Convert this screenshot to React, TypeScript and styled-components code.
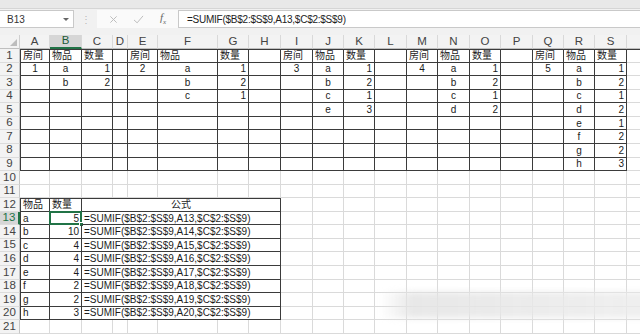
import React from "react";
import styled, { createGlobalStyle } from "styled-components";

const GlobalStyle = createGlobalStyle`
  html, body {
    margin: 0;
    padding: 0;
    background: #fff;
  }
  body {
    width: 640px;
    height: 336px;
    overflow: hidden;
    font-family: "Liberation Sans", "Noto Sans CJK SC", sans-serif;
  }
  * { box-sizing: border-box; }
`;

const COL_WIDTHS = [30, 32, 31, 15, 30, 60, 31, 32, 32, 31, 31, 32, 31, 32, 31, 32, 31, 31, 32, 40];
const LETTERS = "ABCDEFGHIJKLMNOPQRST".split("");
const ROW_COUNT = 21;

type Align = "left" | "center" | "right";

type CellSpec = {
  text?: string;
  align?: Align;
  span?: number;
  dark?: boolean;
  left?: boolean;
  top?: boolean;
  selected?: boolean;
};

const rooms = [
  { col: 0, no: "1", items: [["a", "1"], ["b", "2"]] },
  { col: 4, no: "2", items: [["a", "1"], ["b", "2"], ["c", "1"]] },
  { col: 8, no: "3", items: [["a", "1"], ["b", "2"], ["c", "1"], ["e", "3"]] },
  { col: 12, no: "4", items: [["a", "1"], ["b", "2"], ["c", "1"], ["d", "2"]] },
  {
    col: 16,
    no: "5",
    items: [["a", "1"], ["b", "2"], ["c", "1"], ["d", "2"], ["e", "1"], ["f", "2"], ["g", "2"], ["h", "3"]],
  },
];

const totals = [["a", "5"], ["b", "10"], ["c", "4"], ["d", "4"], ["e", "4"], ["f", "2"], ["g", "2"], ["h", "3"]];

const plainCells = (n: number): CellSpec[] => Array.from({ length: n }, () => ({}));

function buildRow(r: number): CellSpec[] {
  if (r <= 9) {
    const cells: CellSpec[] = Array.from({ length: 20 }, (_, c) => ({
      dark: c < 19,
      left: c === 0,
      top: r === 1,
    }));
    rooms.forEach((room) => {
      if (r === 1) {
        cells[room.col].text = "房间";
        cells[room.col + 1].text = "物品";
        cells[room.col + 2].text = "数量";
        return;
      }
      if (r === 2) {
        cells[room.col].text = room.no;
        cells[room.col].align = "center";
      }
      const item = room.items[r - 2];
      if (item) {
        cells[room.col + 1].text = item[0];
        cells[room.col + 1].align = "center";
        cells[room.col + 2].text = item[1];
        cells[room.col + 2].align = "right";
      }
    });
    return cells;
  }
  if (r <= 11 || r > 20) return plainCells(20);

  const head = r === 12;
  const t = head ? ["物品", "数量"] : totals[r - 13];
  return [
    { dark: true, left: true, top: head, text: t[0] },
    { dark: true, top: head, text: t[1], align: head ? "left" : "right", selected: r === 13 },
    {
      dark: true,
      top: head,
      span: 6,
      text: head ? "公式" : `=SUMIF($B$2:$S$9,A${r},$C$2:$S$9)`,
      align: head ? "center" : "left",
    },
    ...plainCells(12),
  ];
}

/* ---------- top chrome ---------- */

const Chrome = styled.div`
  height: 35px;
  background: #f1f1f1;
  display: flex;
  flex-direction: column;
`;

const RibbonEdge = styled.div`
  height: 9px;
  background: #e8e8e8;
  border-bottom: 1px solid #d5d5d5;
`;

const FormulaRow = styled.div`
  display: flex;
  height: 18px;
  margin-top: 1px;
`;

const NameBox = styled.div`
  width: 74px;
  background: #fff;
  border: 1px solid #c9c9c9;
  border-left: none;
  display: flex;
  align-items: center;
  justify-content: space-between;
  padding: 0 4px 0 7px;
  font-size: 10px;
  color: #333;
`;

const DropArrow = styled.span`
  width: 0;
  height: 0;
  border-left: 3px solid transparent;
  border-right: 3px solid transparent;
  border-top: 3px solid #666;
`;

const Grip = styled.div`
  width: 23px;
  display: flex;
  align-items: center;
  justify-content: center;
  color: #b8b8b8;
  font-size: 10px;
  letter-spacing: -1px;
`;

const FxGroup = styled.div`
  width: 81px;
  background: #fafafa;
  display: flex;
  align-items: center;
  justify-content: space-around;
  padding: 0 4px;
  color: #b5b5b5;
`;

const Fx = styled.span`
  font-family: "Liberation Serif", serif;
  font-style: italic;
  font-size: 11px;
  color: #666;
  sub {
    font-size: 7px;
  }
`;

const FormulaInput = styled.div`
  flex: 1;
  background: #fff;
  border: 1px solid #c9c9c9;
  border-right: none;
  display: flex;
  align-items: center;
  padding-left: 8px;
  font-size: 10px;
  letter-spacing: -0.25px;
  color: #222;
`;

/* ---------- sheet ---------- */

const Sheet = styled.div`
  display: grid;
  grid-template-columns: 20px ${COL_WIDTHS.map((w) => `${w}px`).join(" ")};
  grid-template-rows: 14px repeat(${ROW_COUNT}, 13.57px);
  overflow: hidden;
  width: 640px;
`;

const Corner = styled.div`
  background: #f3f3f3;
  border-right: 1px solid #cfcfcf;
  border-bottom: 1px solid #bfbfbf;
  display: flex;
  align-items: flex-end;
  justify-content: flex-end;
  padding: 0 2px 2px 0;
`;

const ColHead = styled.div<{ $active?: boolean }>`
  background: ${(p) => (p.$active ? "#d6d6d6" : "#f3f3f3")};
  border-right: 1px solid #d9d9d9;
  border-bottom: ${(p) => (p.$active ? "2px solid #217346" : "1px solid #bfbfbf")};
  color: ${(p) => (p.$active ? "#1e5c38" : "#444")};
  font-size: 11.5px;
  display: flex;
  align-items: center;
  justify-content: center;
  line-height: 1;
`;

const RowHead = styled.div<{ $active?: boolean }>`
  background: ${(p) => (p.$active ? "#d6d6d6" : "#f3f3f3")};
  border-right: ${(p) => (p.$active ? "2px solid #217346" : "1px solid #c6c6c6")};
  border-bottom: 1px solid #dcdcdc;
  color: ${(p) => (p.$active ? "#217346" : "#444")};
  font-size: 11.5px;
  display: flex;
  align-items: center;
  justify-content: center;
  line-height: 1;
`;

const Cell = styled.div<{ $dark?: boolean; $left?: boolean; $top?: boolean; $align?: Align; $span?: number }>`
  position: relative;
  grid-column: span ${(p) => p.$span ?? 1};
  border-right: 1px solid ${(p) => (p.$dark ? "#3b3b3b" : "#dadada")};
  border-bottom: 1px solid ${(p) => (p.$dark ? "#3b3b3b" : "#dadada")};
  box-shadow: ${(p) =>
    [p.$left ? "inset 1px 0 0 #3b3b3b" : "", p.$top ? "inset 0 1px 0 #3b3b3b" : ""].filter(Boolean).join(", ") ||
    "none"};
  display: flex;
  align-items: center;
  justify-content: ${(p) => (p.$align === "right" ? "flex-end" : p.$align === "center" ? "center" : "flex-start")};
  padding: 1px 2px 0 ${(p) => (p.$left ? 3 : 2)}px;
  font-size: 10px;
  color: #1c1c1c;
  white-space: nowrap;
  line-height: 1;
`;

const Selection = styled.div`
  position: absolute;
  left: -1px;
  top: -1px;
  right: -1px;
  bottom: -1px;
  border: 2px solid #217346;
  pointer-events: none;
`;

const FillHandle = styled.div`
  position: absolute;
  right: -4px;
  bottom: -4px;
  width: 5px;
  height: 5px;
  background: #217346;
  border: 1px solid #fff;
`;

const Page = styled.div`
  position: relative;
  width: 640px;
  height: 336px;
  overflow: hidden;
`;

const Smudge = styled.div`
  position: absolute;
  left: 380px;
  top: 292px;
  width: 270px;
  height: 26px;
  background: linear-gradient(to right, rgba(228, 228, 228, 0), rgba(228, 228, 228, 0.85) 12%, rgba(236, 236, 236, 0.8));
  filter: blur(3px);
  pointer-events: none;
`;

const App: React.FC = () => {
  const rows = Array.from({ length: ROW_COUNT }, (_, i) => i + 1);

  return (
    <Page>
      <GlobalStyle />
      <Chrome>
        <RibbonEdge />
        <FormulaRow>
          <NameBox>
            B13
            <DropArrow />
          </NameBox>
          <Grip>⋮</Grip>
          <FxGroup>
            <svg width="9" height="9" viewBox="0 0 10 10">
              <path d="M1.5 1.5l7 7M8.5 1.5l-7 7" stroke="#bdbdbd" strokeWidth="1.1" fill="none" />
            </svg>
            <svg width="11" height="9" viewBox="0 0 12 10">
              <path d="M1 5.5l3.5 3.2L11 1" stroke="#bdbdbd" strokeWidth="1.1" fill="none" />
            </svg>
            <Fx>
              f<sub>x</sub>
            </Fx>
          </FxGroup>
          <FormulaInput>=SUMIF($B$2:$S$9,A13,$C$2:$S$9)</FormulaInput>
        </FormulaRow>
      </Chrome>

      <Sheet>
        <Corner>
          <svg width="7" height="7" viewBox="0 0 7 7">
            <path d="M7 0V7H0Z" fill="#bdbdbd" />
          </svg>
        </Corner>
        {LETTERS.map((l) => (
          <ColHead key={l} $active={l === "B"}>
            {l === "T" ? "" : l}
          </ColHead>
        ))}

        {rows.map((r) => (
          <React.Fragment key={r}>
            <RowHead $active={r === 13}>{r}</RowHead>
            {buildRow(r).map((c, i) => (
              <Cell key={i} $dark={c.dark} $left={c.left} $top={c.top} $align={c.align} $span={c.span}>
                {c.text}
                {c.selected && (
                  <Selection>
                    <FillHandle />
                  </Selection>
                )}
              </Cell>
            ))}
          </React.Fragment>
        ))}
      </Sheet>
      <Smudge />
    </Page>
  );
};

export default App;
